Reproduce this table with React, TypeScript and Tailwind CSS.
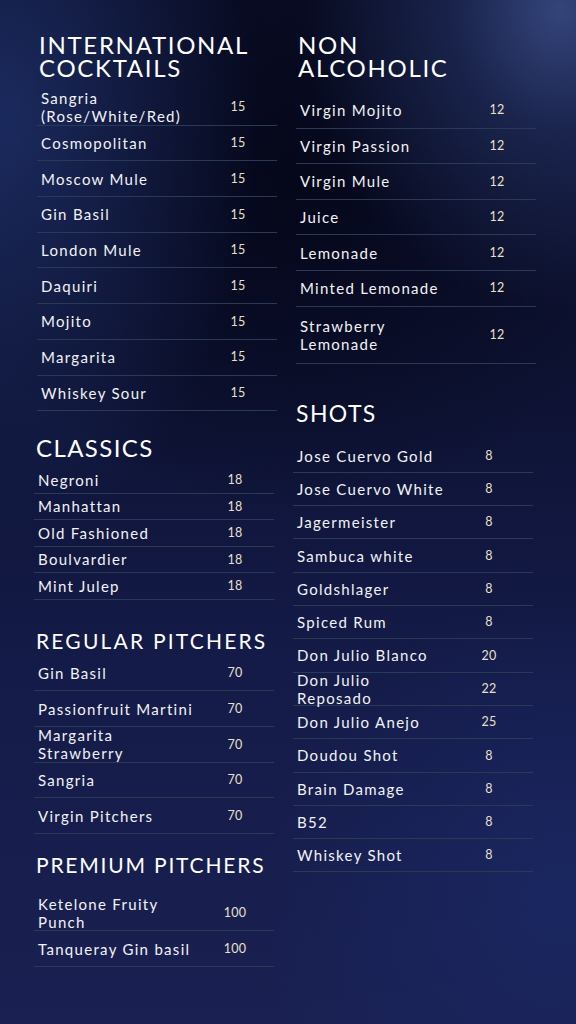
import React from "react";

type Item = { name: string[]; price: string; h?: string };

const F = { fontFamily: "Lato, 'Open Sans', sans-serif" };

function Row({ item, rowH, nameW }: { item: Item; rowH: string; nameW: string }) {
  return (
    <div className={`flex items-center border-b border-[#2a3a56] ${item.h ?? rowH}`}>
      <div className={`pl-[4px] ${nameW} text-[15px] leading-[18px] tracking-[1.3px] text-[#f2f2f5]`}>
        {item.name.map((n, i) => (
          <div key={i}>{n}</div>
        ))}
      </div>
      <div className="w-[24px] pt-[1px] text-center text-[12.5px] tracking-[0.3px] text-[#e9e0cc]">{item.price}</div>
    </div>
  );
}

const intl: Item[] = [
  { name: ["Sangria", "(Rose/White/Red)"], price: "15" },
  { name: ["Cosmopolitan"], price: "15" },
  { name: ["Moscow Mule"], price: "15" },
  { name: ["Gin Basil"], price: "15" },
  { name: ["London Mule"], price: "15" },
  { name: ["Daquiri"], price: "15" },
  { name: ["Mojito"], price: "15" },
  { name: ["Margarita"], price: "15" },
  { name: ["Whiskey Sour"], price: "15" },
];

const classics: Item[] = [
  { name: ["Negroni"], price: "18" },
  { name: ["Manhattan"], price: "18" },
  { name: ["Old Fashioned"], price: "18" },
  { name: ["Boulvardier"], price: "18" },
  { name: ["Mint Julep"], price: "18" },
];

const regular: Item[] = [
  { name: ["Gin Basil"], price: "70" },
  { name: ["Passionfruit Martini"], price: "70" },
  { name: ["Margarita", "Strawberry"], price: "70" },
  { name: ["Sangria"], price: "70" },
  { name: ["Virgin Pitchers"], price: "70" },
];

const premium: Item[] = [
  { name: ["Ketelone Fruity", "Punch"], price: "100" },
  { name: ["Tanqueray Gin basil"], price: "100" },
];

const nonAlc: Item[] = [
  { name: ["Virgin Mojito"], price: "12" },
  { name: ["Virgin Passion"], price: "12" },
  { name: ["Virgin Mule"], price: "12" },
  { name: ["Juice"], price: "12" },
  { name: ["Lemonade"], price: "12" },
  { name: ["Minted Lemonade"], price: "12" },
  { name: ["Strawberry", "Lemonade"], price: "12", h: "h-[57px]" },
];

const shots: Item[] = [
  { name: ["Jose Cuervo Gold"], price: "8" },
  { name: ["Jose Cuervo White"], price: "8" },
  { name: ["Jagermeister"], price: "8" },
  { name: ["Sambuca white"], price: "8" },
  { name: ["Goldshlager"], price: "8" },
  { name: ["Spiced Rum"], price: "8" },
  { name: ["Don Julio Blanco"], price: "20" },
  { name: ["Don Julio", "Reposado"], price: "22" },
  { name: ["Don Julio Anejo"], price: "25" },
  { name: ["Doudou Shot"], price: "8" },
  { name: ["Brain Damage"], price: "8" },
  { name: ["B52"], price: "8" },
  { name: ["Whiskey Shot"], price: "8" },
];

export default function App() {
  return (
    <div
      style={F}
      className="relative w-[576px] h-[1024px] overflow-hidden bg-[#0a0d26] bg-[radial-gradient(ellipse_260px_300px_at_560px_10px,#34447a_0%,rgba(40,56,110,0.55)_40%,rgba(10,13,38,0)_100%),radial-gradient(ellipse_260px_420px_at_0px_120px,#1b2a5e_0%,rgba(27,42,94,0)_100%),radial-gradient(ellipse_360px_330px_at_290px_180px,#05071a_0%,rgba(5,7,26,0)_100%),radial-gradient(ellipse_300px_300px_at_560px_900px,#1a2660_0%,rgba(26,38,96,0)_100%),linear-gradient(180deg,#0a0d26_0%,#0d1232_35%,#141b48_65%,#1a2152_100%)]"
    >
      <div className="flex">
        {/* Left column */}
        <div className="flex flex-col ml-[34px]">
          <div className="ml-[3px] w-[240px] pt-[33px]">
            <h2 className="pl-[2px] text-[24px] leading-[23px] tracking-[1.7px] text-white font-normal">
              INTERNATIONAL
              <br />
              COCKTAILS
            </h2>
            <div className="mt-[11px]">
              {intl.map((it, i) => (
                <Row key={i} item={it} rowH="h-[35.7px]" nameW="w-[189px]" />
              ))}
            </div>
          </div>

          <div className="w-[240px] mt-[25px]">
            <h2 className="pl-[2px] text-[24px] leading-[23px] tracking-[1.4px] text-white font-normal">CLASSICS</h2>
            <div className="mt-[8px]">
              {classics.map((it, i) => (
                <Row key={i} item={it} rowH="h-[26.5px]" nameW="w-[189px]" />
              ))}
            </div>
          </div>

          <div className="w-[240px] mt-[29px]">
            <h2 className="pl-[2px] text-[21px] leading-[24px] tracking-[2.2px] text-white font-normal whitespace-nowrap">REGULAR PITCHERS</h2>
            <div className="mt-[3px]">
              {regular.map((it, i) => (
                <Row key={i} item={it} rowH="h-[35.7px]" nameW="w-[189px]" />
              ))}
            </div>
          </div>

          <div className="w-[240px] mt-[19px]">
            <h2 className="pl-[2px] text-[21px] leading-[24px] tracking-[1.8px] text-white font-normal whitespace-nowrap">PREMIUM PITCHERS</h2>
            <div className="mt-[18px]">
              {premium.map((it, i) => (
                <Row key={i} item={it} rowH="h-[36px]" nameW="w-[189px]" />
              ))}
            </div>
          </div>
        </div>

        {/* Right column */}
        <div className="flex flex-col ml-[16px]">
          <div className="ml-[3px] w-[240px] pt-[33px]">
            <h2 className="pl-[2px] text-[24px] leading-[23px] tracking-[1.7px] text-white font-normal">
              NON
              <br />
              ALCOHOLIC
            </h2>
            <div className="mt-[14px]">
              {nonAlc.map((it, i) => (
                <Row key={i} item={it} rowH="h-[35.6px]" nameW="w-[189px]" />
              ))}
            </div>
          </div>

          <div className="w-[240px] mt-[38px]">
            <h2 className="pl-[3px] text-[23px] leading-[23px] tracking-[1.4px] text-white font-normal">SHOTS</h2>
            <div className="mt-[15px]">
              {shots.map((it, i) => (
                <Row key={i} item={it} rowH="h-[33.3px]" nameW="w-[184px]" />
              ))}
            </div>
          </div>
        </div>
      </div>
    </div>
  );
}
